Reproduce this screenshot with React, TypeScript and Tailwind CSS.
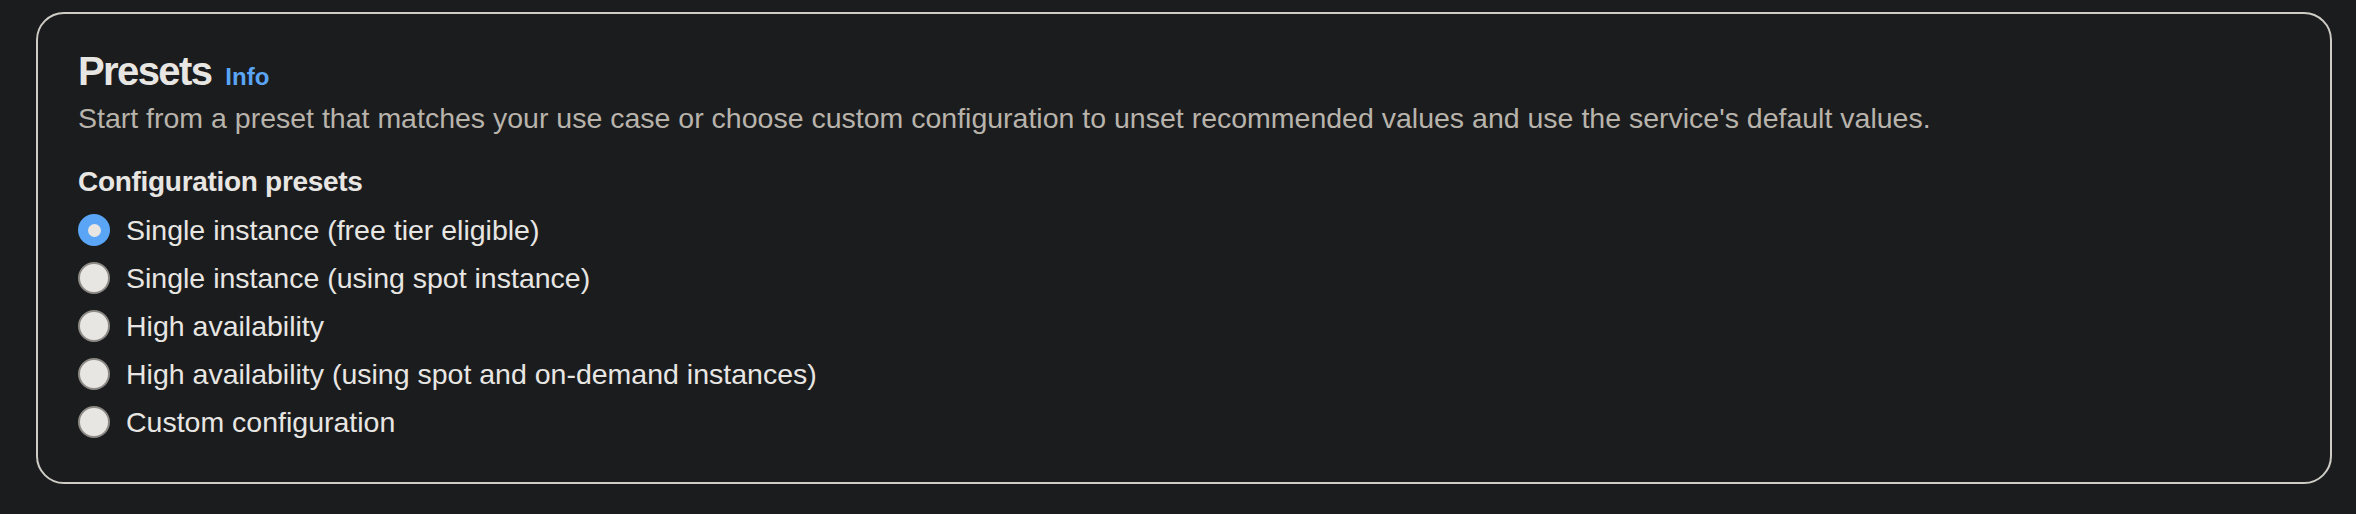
import { useState } from "react"

const presets = [
  "Single instance (free tier eligible)",
  "Single instance (using spot instance)",
  "High availability",
  "High availability (using spot and on-demand instances)",
  "Custom configuration",
]

export default function App() {
  const [selected, setSelected] = useState(0)

  return (
    <div className="min-h-[514px] w-full bg-[#1b1c1e] pt-[12px] font-['Liberation_Sans',Arial,sans-serif]">
      <section className="ml-[36px] w-[2296px] rounded-[28px] border-2 border-[#cfccc7] pb-[40px] pl-[40px] pr-[40px] pt-[33px]">
        <div className="flex h-[48px] items-baseline gap-[14px]">
          <h2 className="text-[40px] font-bold leading-[48px] tracking-[-1.6px] text-[#e8e6e3]">Presets</h2>
          <a href="#" className="text-[24px] font-bold leading-[24px] text-[#5aa5f5]">
            Info
          </a>
        </div>
        <p className="mt-[3px] text-[28.5px] leading-[40px] text-[#b8b3ab]">
          Start from a preset that matches your use case or choose custom configuration to unset recommended values and use the service's default values.
        </p>

        <div className="mt-[24px] text-[28px] font-bold leading-[40px] tracking-[-0.3px] text-[#e8e6e3]">
          Configuration presets
        </div>
        <div className="mt-[8px] flex flex-col gap-[8px]">
          {presets.map((label, i) => (
            <label
              key={label}
              className="flex h-[40px] cursor-pointer items-center gap-[16px]"
              onClick={() => setSelected(i)}
            >
              {selected === i ? (
                <span className="flex h-[32px] w-[32px] items-center justify-center rounded-full bg-[#5aa5f5]">
                  <span className="h-[13px] w-[13px] rounded-full bg-[#e8e6e3]" />
                </span>
              ) : (
                <span className="h-[32px] w-[32px] rounded-full border-2 border-[#8e8b86] bg-[#e8e6e3]" />
              )}
              <span className="text-[28.5px] leading-[40px] text-[#e8e6e3]">{label}</span>
            </label>
          ))}
        </div>
      </section>
    </div>
  )
}
